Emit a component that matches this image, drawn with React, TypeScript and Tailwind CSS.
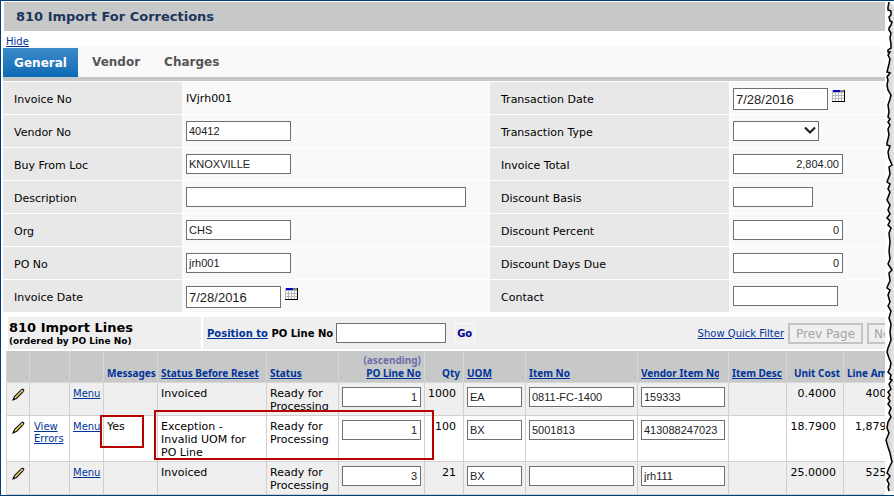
import { useId } from 'react'
import type { ReactNode } from 'react'

interface Field {
  label: string
  control: (id: string) => ReactNode
}

interface ImportLine {
  errors?: boolean
  messages?: string
  before: string
  status: string
  poLine: string
  qty: string
  uom: string
  item: string
  vendorItem: string
  unitCost: string
  amount: string
}

const BOX = 'border border-[#707070] bg-white text-[#222] outline-none font-["Liberation_Sans",sans-serif]'
const SMALL = `${BOX} h-5 pl-0.5 pr-[3px] text-[11px] leading-4`
const DATE = `${BOX} h-[22px] w-[95px] px-0.5 text-[13px]`
const LINK = 'text-[#003399] underline'
const PAGER = 'ml-1 h-[21px] w-[75px] shrink-0 border-2 border-[#c4c4c4] text-[12px] font-normal text-[#a5a5a5]'

function CalendarIcon() {
  return (
    <svg width="13" height="12" viewBox="0 0 13 12" shapeRendering="crispEdges">
      <rect width="13" height="12" fill="#b8b8b8" />
      <path d="M1 3h2v2H1zM4 3h2v2H4zM7 3h2v2H7zM10 3h2v2h-2zM1 6h2v2H1zM4 6h2v2H4zM7 6h2v2H7zM10 6h2v2h-2zM1 9h2v2H1zM4 9h2v2H4zM7 9h2v2H7zM10 9h2v2h-2z" fill="#fff" />
      <rect x="1" width="7" height="2" fill="#0000c8" />
      <rect x="8" width="5" height="2" fill="#808080" />
      <path d="M12.5 0v12M0 11.5h13" stroke="#000" />
    </svg>
  )
}

function PencilIcon() {
  return (
    <svg width="13" height="13" viewBox="0 0 13 13">
      <path d="M1.2 11.8l1.3-3.3 7-6.8 1.3-.5 1 1-.5 1.3-6.8 7z" fill="#ead95c" stroke="#111" strokeWidth="1.1" />
      <path d="M9.3 2.2l1.6 1.6" stroke="#d9a09a" strokeWidth="1.5" />
      <path d="M.4 12.6l1.1-2.8 1.7 1.7z" fill="#000" />
    </svg>
  )
}

function DateField({ id, value }: { id: string; value: string }) {
  return (
    <div className="flex items-start gap-1">
      <input id={id} defaultValue={value} className={DATE} />
      <button aria-label="Open calendar" className="pt-0.5">
        <CalendarIcon />
      </button>
    </div>
  )
}

const LEFT: Field[] = [
  { label: 'Invoice No', control: (id) => <output id={id} className="leading-[22px]">IVjrh001</output> },
  { label: 'Vendor No', control: (id) => <input id={id} defaultValue="40412" className={`${SMALL} w-[105px]`} /> },
  { label: 'Buy From Loc', control: (id) => <input id={id} defaultValue="KNOXVILLE" className={`${SMALL} w-[105px]`} /> },
  { label: 'Description', control: (id) => <input id={id} className={`${SMALL} w-[280px]`} /> },
  { label: 'Org', control: (id) => <input id={id} defaultValue="CHS" className={`${SMALL} w-[105px]`} /> },
  { label: 'PO No', control: (id) => <input id={id} defaultValue="jrh001" className={`${SMALL} w-[105px]`} /> },
  { label: 'Invoice Date', control: (id) => <DateField id={id} value="7/28/2016" /> },
]

const RIGHT: Field[] = [
  { label: 'Transaction Date', control: (id) => <DateField id={id} value="7/28/2016" /> },
  {
    label: 'Transaction Type',
    control: (id) => (
      <div className="relative w-fit">
        <select id={id} className={`${SMALL} block w-[86px] appearance-none`} />
        <svg className="pointer-events-none absolute right-[3px] top-[5px]" width="12" height="9" viewBox="0 0 12 9">
          <path d="M1 1.5l5 5 5-5" fill="none" stroke="#222" strokeWidth="2.2" />
        </svg>
      </div>
    ),
  },
  { label: 'Invoice Total', control: (id) => <input id={id} defaultValue="2,804.00" className={`${SMALL} w-[110px] text-right`} /> },
  { label: 'Discount Basis', control: (id) => <input id={id} className={`${SMALL} w-20`} /> },
  { label: 'Discount Percent', control: (id) => <input id={id} defaultValue="0" className={`${SMALL} w-[110px] text-right`} /> },
  { label: 'Discount Days Due', control: (id) => <input id={id} defaultValue="0" className={`${SMALL} w-[110px] text-right`} /> },
  { label: 'Contact', control: (id) => <input id={id} className={`${SMALL} w-[105px]`} /> },
]

const LINES: ImportLine[] = [
  { before: 'Invoiced', status: 'Ready for Processing', poLine: '1', qty: '1000', uom: 'EA', item: '0811-FC-1400', vendorItem: '159333', unitCost: '0.4000', amount: '400.0000' },
  { errors: true, messages: 'Yes', before: 'Exception - Invalid UOM for PO Line', status: 'Ready for Processing', poLine: '1', qty: '100', uom: 'BX', item: '5001813', vendorItem: '413088247023', unitCost: '18.7900', amount: '1,879.0000' },
  { before: 'Invoiced', status: 'Ready for Processing', poLine: '3', qty: '21', uom: 'BX', item: '', vendorItem: 'jrh111', unitCost: '25.0000', amount: '525.0000' },
]

function FieldRow({ field, labelWidth }: { field: Field; labelWidth: string }) {
  const id = useId()
  return (
    <div className="flex h-8 gap-px">
      <label htmlFor={id} className={`${labelWidth} shrink-0 bg-[#e8e8e8] pl-[11px] pt-0.5 leading-8`}>
        {field.label}
      </label>
      <div className="min-w-0 flex-1 bg-[#f9f9f9] pl-[3px] pt-[6px]">{field.control(id)}</div>
    </div>
  )
}

function LineRow({ line, index }: { line: ImportLine; index: number }) {
  const td = 'border-b border-r border-[#d0d0d0] pt-1 align-top'
  const input = `${SMALL} block w-full`
  const n = index + 1
  return (
    <tr className={`${line.errors ? 'h-[46px] bg-white' : 'h-[33px] bg-[#efefef]'} leading-[13px]`}>
      <td className={`${td} border-l pl-[5px]`}>
        <button aria-label={`Edit line ${n}`} className="mt-px block">
          <PencilIcon />
        </button>
      </td>
      <td className={`${td} px-1 text-[10px] leading-3`}>
        {line.errors && <a href="#errors" className={`${LINK} mt-px block`}>View Errors</a>}
      </td>
      <td className={`${td} px-[3px] text-[10px]`}>
        <a href="#menu" className={LINK}>Menu</a>
      </td>
      <td className={`${td} relative px-[3px]`}>
        {line.messages}
        {line.errors && <span className="pointer-events-none absolute -left-1 -top-px h-[33px] w-11 border-2 border-[#b80000]" />}
      </td>
      <td className={`${td} relative pl-[3px] pr-3`}>
        {line.before}
        {line.errors && <span className="pointer-events-none absolute -left-1 -top-[6px] z-10 h-[50px] w-[280px] border-2 border-[#b80000]" />}
      </td>
      <td className={`${td} px-[3px]`}>{line.status}</td>
      <td className={`${td} px-[3px]`}><input aria-label={`PO Line No ${n}`} defaultValue={line.poLine} className={`${input} text-right`} /></td>
      <td className={`${td} pr-[7px] text-right`}>{line.qty}</td>
      <td className={`${td} px-[3px]`}><input aria-label={`UOM ${n}`} defaultValue={line.uom} className={input} /></td>
      <td className={`${td} px-[3px]`}><input aria-label={`Item No ${n}`} defaultValue={line.item} className={input} /></td>
      <td className={`${td} px-[3px]`}><input aria-label={`Vendor Item No ${n}`} defaultValue={line.vendorItem} className={input} /></td>
      <td className={td} />
      <td className={`${td} pr-[7px] text-right`}>{line.unitCost}</td>
      <td className={`${td} pr-1 text-right`}>{line.amount}</td>
    </tr>
  )
}

const TEAR =
  '4,0 3,5 3,8 6,9 6,13 4,15 5,19 7,20 6,23 4,26 4,28 6,31 5,36 6,42 6,46 3,48 3,50 5,50 3,53 5,57 4,62 2,70 5,71 2,75 3,78 2,83 3,88 6,93 5,97 3,103 4,110 3,115 5,117 3,120 5,123 3,127 4,133 2,141 2,143 5,144 3,150 4,156 7,163 4,165 5,172 2,180 5,182 3,187 5,190 2,198 5,203 3,208 5,212 2,216 5,219 3,223 6,226 4,231 5,240 4,249 5,257 3,262 7,268 4,271 5,279 3,283 2,286 5,288 3,293 5,300 3,304 6,309 4,316 6,322 5,330 6,338 3,346 2,350 4,356 6,361 5,366 3,370 6,373 5,377 7,378 4,382 6,387 3,390 5,393 3,396 5,399 3,402 6,406 4,411 6,415 3,420 2,426 4,431 1,438 3,445 5,451 7,460 4,466 2,471 5,474 2,478 4,482 3,485 4,489'

function TornEdge() {
  return (
    <svg className="absolute right-0 top-px z-20" width="9" height="493">
      <defs>
        <linearGradient id="shade">
          <stop offset="0" stopColor="#cdcdcd" />
          <stop offset="1" stopColor="#e6e6e6" />
        </linearGradient>
      </defs>
      <rect width="9" height="493" fill="#fff" />
      <polygon points={`${TEAR} 9,489 9,4`} fill="url(#shade)" />
      <polyline points={TEAR} fill="none" stroke="#000" strokeWidth="1.5" />
    </svg>
  )
}

export default function App() {
  const th = 'border-b border-r border-[#d6d6d6] px-[3px] pb-0.5 align-bottom whitespace-nowrap text-left'
  return (
    <main className='relative overflow-hidden border-y border-l border-[#003d7c] bg-white font-["DejaVu_Sans",sans-serif] text-[11px] text-black'>
      <h1 className="ml-[3px] mt-px h-[29px] bg-[#c7c9c8] pl-3 text-[13px] font-bold leading-[30px] text-[#1b365d]">
        810 Import For Corrections
      </h1>
      <div className="h-4 pl-[5px] pt-[5px] text-[10px] leading-3">
        <a href="#hide" className={LINK}>Hide</a>
      </div>

      <nav className="ml-0.5 flex h-[34px] border-b-4 border-[#c7c9c8] bg-[#f9f9f9] text-[12px] font-bold text-[#555]">
        <button className="mt-px w-[75px] bg-linear-to-b from-[#3b8bca] to-[#0b69b5] text-white">General</button>
        <button className="ml-[14px]">Vendor</button>
        <button className="ml-6">Charges</button>
      </nav>

      <section className="ml-0.5 mt-px flex gap-px">
        <div className="flex w-[486px] shrink-0 flex-col gap-px">
          {LEFT.map((f) => <FieldRow key={f.label} field={f} labelWidth="w-[179px]" />)}
        </div>
        <div className="flex min-w-0 flex-1 flex-col gap-px">
          {RIGHT.map((f) => <FieldRow key={f.label} field={f} labelWidth="w-[239px]" />)}
        </div>
      </section>

      <section className="ml-[7px] mt-[5px] flex h-8 gap-0.5 font-bold">
        <div className="w-[193px] bg-[#efefef] pl-px pt-[3px]">
          <h2 className="text-[13px] leading-[15px]">810 Import Lines</h2>
          <p className="text-[9px] leading-[13px]">(ordered by PO Line No)</p>
        </div>
        <div className="flex flex-1 items-center bg-[#efefef] pl-1 pr-2 text-[10px]">
          <label htmlFor="position" className="whitespace-nowrap">
            <a href="#position" className={LINK}>Position to</a> PO Line No
          </label>
          <input id="position" className={`${SMALL} ml-[3px] w-[110px]`} />
          <button className="ml-2 h-5 border border-[#fafafa] px-0.5 font-bold text-[#000099]">Go</button>
          <a href="#filter" className={`${LINK} ml-auto whitespace-nowrap font-normal`}>Show Quick Filter</a>
          <button disabled className={PAGER}>Prev Page</button>
          <button disabled className={`${PAGER} -mr-14`}>Next Page</button>
        </div>
      </section>

      <table className="ml-[5px] mt-0.5 w-[917px] table-fixed border-separate border-spacing-0">
        <colgroup>
          <col className="w-6" />
          <col className="w-10" />
          <col className="w-[34px]" />
          <col className="w-[54px]" />
          <col className="w-[109px]" />
          <col className="w-[72px]" />
          <col className="w-[86px]" />
          <col className="w-[39px]" />
          <col className="w-[62px]" />
          <col className="w-28" />
          <col className="w-[91px]" />
          <col className="w-[58px]" />
          <col className="w-[57px]" />
          <col />
        </colgroup>
        <thead>
          <tr className='h-8 bg-[#c7c9c8] font-["Noto_Sans",sans-serif] text-[10px] leading-[13px] text-[#003399]'>
            <th className={`${th} border-l`} />
            <th className={th} />
            <th className={th} />
            <th className={th}>Messages</th>
            <th className={th}><a href="#before" className="underline">Status Before Reset</a></th>
            <th className={th}><a href="#status" className="underline">Status</a></th>
            <th className={`${th} text-right`}>
              <span className="block text-[#6c6ca8]">(ascending)</span>
              <a href="#line" className="underline">PO Line No</a>
            </th>
            <th className={`${th} text-right`}>Qty</th>
            <th className={th}><a href="#uom" className="underline">UOM</a></th>
            <th className={th}><a href="#item" className="underline">Item No</a></th>
            <th className={th}><div className="w-[78px] overflow-hidden"><a href="#vendor-item" className="underline">Vendor Item No</a></div></th>
            <th className={th}><a href="#desc" className="underline">Item Desc</a></th>
            <th className={`${th} text-right`}>Unit Cost</th>
            <th className={th}>Line Amount</th>
          </tr>
        </thead>
        <tbody>
          {LINES.map((line, i) => <LineRow key={i} line={line} index={i} />)}
        </tbody>
      </table>
      <TornEdge />
    </main>
  )
}
